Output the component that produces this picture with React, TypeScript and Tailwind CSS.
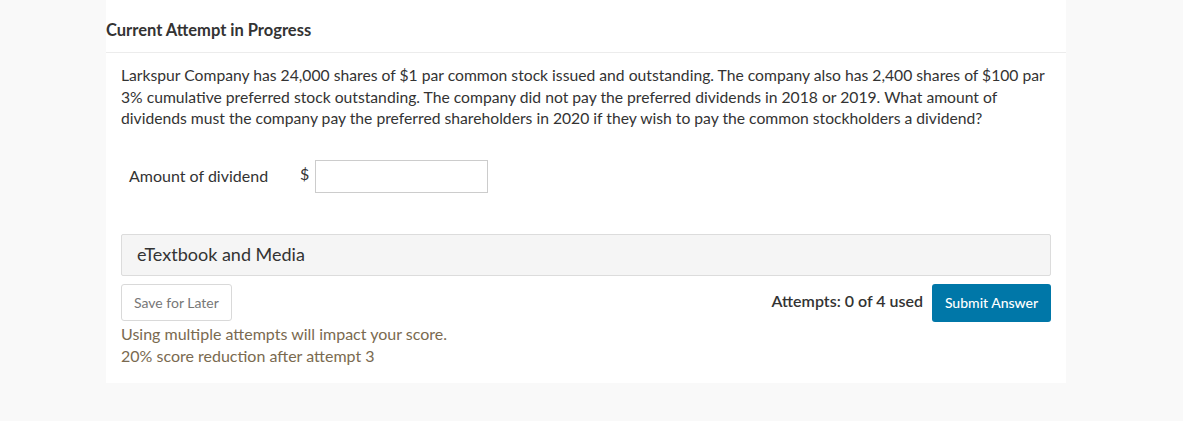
export default function App() {
  return (
    <div className="min-h-[421px] w-full bg-[#f9f9f9] font-['Lato','Open_Sans',sans-serif] text-[#333]">
      <div className="ml-[106px] w-[960px] bg-white pb-[16px]">
        <div className="pt-[20px] pb-[12px] text-[16.5px] font-bold leading-[20px] text-[#333]">
          Current Attempt in Progress
        </div>
        <div className="h-px bg-[#ececec]" />
        <div className="px-[15px]">
          <p className="mt-[12px] w-[940px] text-[15.7px] leading-[21.5px] text-[#333]">
            Larkspur Company has 24,000 shares of $1 par common stock issued and outstanding. The company also has 2,400 shares of $100 par 3% cumulative preferred stock outstanding. The company did not pay the preferred dividends in 2018 or 2019. What amount of dividends must the company pay the preferred shareholders in 2020 if they wish to pay the common stockholders a dividend?
          </p>
          <div className="mt-[30px] flex items-center pl-[8px]">
            <span className="w-[171px] text-[16px] leading-[20px]">Amount of dividend</span>
            <span className="mr-[6px] -mt-[4px] text-[16px] leading-[20px]">$</span>
            <input
              type="text"
              className="h-[33px] w-[173px] border border-[#ccc] bg-white outline-none"
            />
          </div>
          <div className="mt-[41px] flex h-[42px] items-center rounded-[2px] border border-[#dcdcdc] bg-[#f5f5f5] pl-[15px] text-[18px] text-[#333]">
            eTextbook and Media
          </div>
          <div className="mt-[8px] flex items-start justify-between">
            <button className="h-[37px] rounded-[3px] border border-[#d9d9d9] bg-white px-[12px] text-[14px] text-[#777]">
              Save for Later
            </button>
            <div className="flex items-start">
              <span className="mt-[7px] mr-[9px] text-[16px] font-semibold leading-[20px] text-[#333]">
                Attempts: 0 of 4 used
              </span>
              <button className="h-[38px] w-[119px] rounded-[3px] bg-[#0077a8] text-[14px] font-medium text-white">
                Submit Answer
              </button>
            </div>
          </div>
          <div className="mt-[1px] text-[16px] leading-[22px] text-[#7a6a50]">
            <div>Using multiple attempts will impact your score.</div>
            <div>20% score reduction after attempt 3</div>
          </div>
        </div>
      </div>
    </div>
  );
}
